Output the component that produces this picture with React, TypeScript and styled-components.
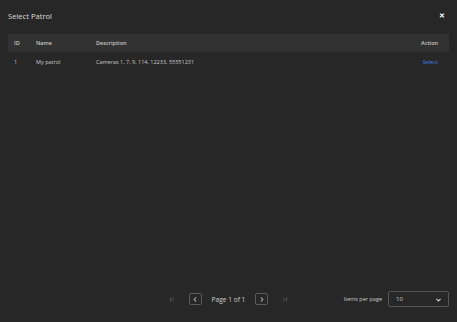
import React from "react";
import styled, { createGlobalStyle } from "styled-components";

const GlobalStyle = createGlobalStyle`
    html, body {
        margin: 0;
        padding: 0;
        background: #272727;
    }
    body {
        font-family: "Open Sans", "Noto Sans", sans-serif;
        color: #d0d0d0;
    }
`;

const Page = styled.div`
    width: 457px;
    height: 322px;
    display: flex;
    flex-direction: column;
    box-sizing: border-box;
    padding: 0 8px;
    background: #272727;
`;

const Header = styled.div`
    height: 32px;
    display: flex;
    align-items: center;
    justify-content: space-between;
`;

const Title = styled.h1`
    margin: 0;
    font-size: 7.6px;
    font-weight: 400;
    color: #dcdcdc;
`;

const CloseButton = styled.button`
    border: none;
    background: none;
    color: #ffffff;
    font-size: 6.5px;
    font-weight: 700;
    padding: 0;
    margin-right: 4px;
    cursor: pointer;
    line-height: 1;
`;

const Table = styled.table`
    width: 100%;
    table-layout: fixed;
    border-collapse: collapse;
    margin-top: 2px;
    font-size: 5.5px;
`;

const Col = styled.col<{ $w?: number }>`
    width: ${(p) => (p.$w ? `${p.$w}px` : "auto")};
`;

const TH = styled.th<{ $right?: boolean }>`
    background: #323232;
    height: 18px;
    padding: 0 ${(p) => (p.$right ? "11px" : "0")} 0 6px;
    text-align: ${(p) => (p.$right ? "right" : "left")};
    font-weight: 600;
    color: #c8c8c8;
`;

const TD = styled.td<{ $right?: boolean }>`
    height: 20px;
    padding: 0 ${(p) => (p.$right ? "11px" : "0")} 0 6px;
    text-align: ${(p) => (p.$right ? "right" : "left")};
    color: #c8c8c8;
    white-space: nowrap;
`;

const SelectLink = styled.a`
    color: #3d84e8;
    text-decoration: none;
    cursor: pointer;
`;

const Spacer = styled.div`
    flex: 1;
`;

const Footer = styled.div`
    height: 30px;
    display: grid;
    grid-template-columns: 1fr auto 1fr;
    align-items: center;
    margin-bottom: 8px;
`;

const Pager = styled.div`
    grid-column: 2;
    display: flex;
    align-items: center;
    gap: 10px;
`;

const PageBtn = styled.button<{ $boxed?: boolean }>`
    width: 13px;
    height: 12px;
    padding: 0;
    display: flex;
    align-items: center;
    justify-content: center;
    background: none;
    border: 1px solid ${(p) => (p.$boxed ? "#5a5a5a" : "transparent")};
    border-radius: 2px;
    color: ${(p) => (p.$boxed ? "#9a9a9a" : "#555")};
`;

const PageLabel = styled.span`
    font-size: 6.6px;
    color: #cfcfcf;
    white-space: nowrap;
`;

const PerPage = styled.div`
    grid-column: 3;
    justify-self: end;
    display: flex;
    align-items: center;
    gap: 6px;
`;

const PerPageLabel = styled.span`
    font-size: 5.5px;
    color: #c8c8c8;
    white-space: nowrap;
`;

const SelectBox = styled.div`
    width: 61px;
    height: 16px;
    box-sizing: border-box;
    border: 1px solid #555;
    border-radius: 2px;
    display: flex;
    align-items: center;
    justify-content: space-between;
    padding: 0 6px 0 7px;
    font-size: 6px;
    color: #d0d0d0;
`;

const Chevron = ({ dir }: { dir: "left" | "right" | "down" }) => {
    const d =
        dir === "left"
            ? "M6 2 L3 5 L6 8"
            : dir === "right"
            ? "M4 2 L7 5 L4 8"
            : "M2 4 L5 7 L8 4";
    return (
        <svg width="7" height="7" viewBox="0 0 10 10">
            <path d={d} fill="none" stroke="currentColor" strokeWidth="1.6" />
        </svg>
    );
};

const EdgeIcon = ({ dir }: { dir: "first" | "last" }) => (
    <svg width="7" height="7" viewBox="0 0 10 10">
        {dir === "first" ? (
            <path d="M2 2 V8 M7 2 L4 5 L7 8" fill="none" stroke="currentColor" strokeWidth="1.4" />
        ) : (
            <path d="M8 2 V8 M3 2 L6 5 L3 8" fill="none" stroke="currentColor" strokeWidth="1.4" />
        )}
    </svg>
);

const ROWS = [["1", "My patrol", "Cameras 1, 7, 9, 114, 12233, 55551231"]];

export default function App() {
    return (
        <>
            <GlobalStyle />
            <Page>
                <Header>
                    <Title>Select Patrol</Title>
                    <CloseButton>✕</CloseButton>
                </Header>
                <Table>
                    <colgroup>
                        <Col $w={22} />
                        <Col $w={60} />
                        <Col />
                        <Col $w={60} />
                    </colgroup>
                    <thead>
                        <tr>
                            <TH>ID</TH>
                            <TH>Name</TH>
                            <TH>Description</TH>
                            <TH $right>Action</TH>
                        </tr>
                    </thead>
                    <tbody>
                        {ROWS.map(([id, name, desc]) => (
                            <tr key={id}>
                                <TD>{id}</TD>
                                <TD>{name}</TD>
                                <TD>{desc}</TD>
                                <TD $right>
                                    <SelectLink>Select</SelectLink>
                                </TD>
                            </tr>
                        ))}
                    </tbody>
                </Table>
                <Spacer />
                <Footer>
                    <Pager>
                        <PageBtn>
                            <EdgeIcon dir="first" />
                        </PageBtn>
                        <PageBtn $boxed>
                            <Chevron dir="left" />
                        </PageBtn>
                        <PageLabel>Page 1 of 1</PageLabel>
                        <PageBtn $boxed>
                            <Chevron dir="right" />
                        </PageBtn>
                        <PageBtn>
                            <EdgeIcon dir="last" />
                        </PageBtn>
                    </Pager>
                    <PerPage>
                        <PerPageLabel>Items per page</PerPageLabel>
                        <SelectBox>
                            <span>10</span>
                            <Chevron dir="down" />
                        </SelectBox>
                    </PerPage>
                </Footer>
            </Page>
        </>
    );
}
